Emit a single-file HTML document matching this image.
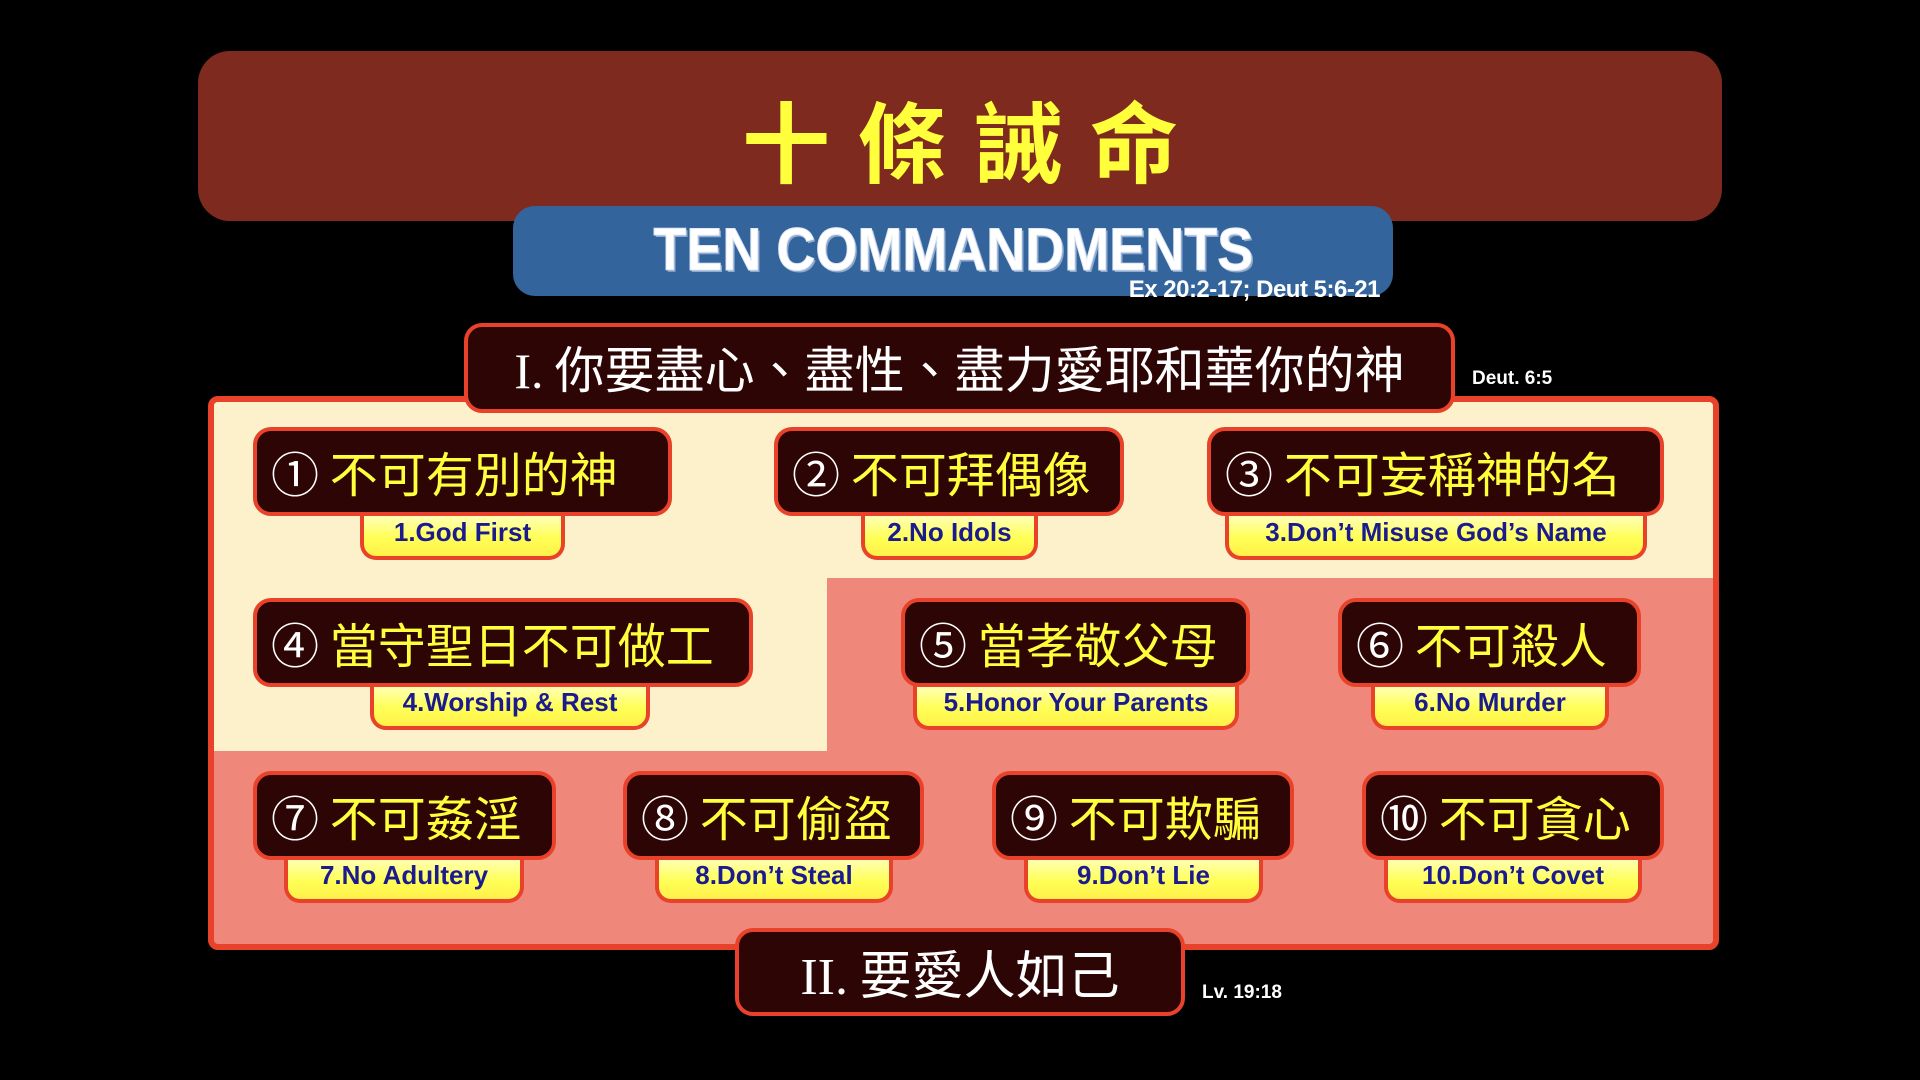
<!DOCTYPE html>
<html><head><meta charset="utf-8"><style>
*{margin:0;padding:0;box-sizing:border-box}
body{width:1920px;height:1080px;background:#000;position:relative;overflow:hidden;font-family:"Liberation Sans","Noto Sans CJK TC",sans-serif}
.abs{position:absolute}
#top{left:198px;top:51px;width:1524px;height:170px;background:#7f2a1f;border-radius:32px}
#title{left:198px;width:1524px;top:94px;text-align:center;color:#ffff3c;font-size:88px;font-weight:bold;letter-spacing:28px;line-height:90px;font-family:"Noto Sans CJK TC",sans-serif;padding-left:28px}
#blue{left:513px;top:206px;width:880px;height:90px;background:#33659c;border-radius:22px}
#ten{left:513px;width:880px;top:220px;text-align:center;color:#fff;font-size:60px;font-weight:bold;line-height:60px}
#ten span{display:inline-block;transform:scaleX(0.9);text-shadow:2px 2px 0 #8fa9cf;-webkit-text-stroke:1px #dfe8f5}
#ex{left:960px;width:420px;top:276px;text-align:right;color:#fff;font-weight:bold;font-size:24px;letter-spacing:-0.5px}
.dark{position:absolute;background:#2e0505;border:4px solid #e8432a;border-radius:18px;color:#ffff3c;font-family:"Noto Sans CJK TC",sans-serif;white-space:nowrap}
.serif{font-family:"Liberation Serif",serif}
#h1{left:464px;top:323px;width:991px;height:90px;color:#fff;text-align:center;font-size:50px;line-height:80px}
#h2{left:735px;top:928px;width:450px;height:88px;color:#fff;text-align:center;font-size:52px;line-height:80px;z-index:5}
.ref{position:absolute;color:#fff;font-weight:bold;font-size:19px}
#panel{left:208px;top:396px;width:1511px;height:554px;background:#f0877b;border:6px solid #e8432a;border-radius:10px;overflow:hidden}
#c1{left:0;top:0;width:1505px;height:176px;background:#fdf1cc}
#c2{left:0;top:0;width:613px;height:349px;background:#fdf1cc}
.box{height:89px;font-size:48px;line-height:80px;padding-left:14px;z-index:3}
.box b{color:#fff;font-weight:normal}
.lab{position:absolute;height:48px;border:4px solid #e8432a;border-top:none;border-radius:0 0 16px 16px;background:linear-gradient(#ffffc8,#ffff55 60%,#fff04a);color:#1b1b8e;font-weight:bold;font-size:26px;text-align:center;line-height:40px;z-index:2;padding-top:0}
</style></head><body>
<div id="top" class="abs"></div>
<div id="title" class="abs">十條誡命</div>
<div id="blue" class="abs"></div>
<div id="ten" class="abs"><span>TEN COMMANDMENTS</span></div>
<div id="ex" class="abs">Ex 20:2-17; Deut 5:6-21</div>

<div id="panel" class="abs"><div id="c1" class="abs"></div><div id="c2" class="abs"></div></div>
<div id="h1" class="dark"><span class="serif">I.</span> 你要盡心、盡性、盡力愛耶和華你的神</div>
<div class="ref" style="left:1472px;top:368px">Deut. 6:5</div>

<div class="dark box" style="left:253px;top:427px;width:419px"><b>①</b> 不可有別的神</div>
<div class="lab" style="left:360px;top:512px;width:205px">1.God First</div>
<div class="dark box" style="left:774px;top:427px;width:350px"><b>②</b> 不可拜偶像</div>
<div class="lab" style="left:861px;top:512px;width:177px">2.No Idols</div>
<div class="dark box" style="left:1207px;top:427px;width:457px"><b>③</b> 不可妄稱神的名</div>
<div class="lab" style="left:1225px;top:512px;width:422px">3.Don’t Misuse God’s Name</div>

<div class="dark box" style="left:253px;top:598px;width:500px"><b>④</b> 當守聖日不可做工</div>
<div class="lab" style="left:370px;top:682px;width:280px">4.Worship &amp; Rest</div>
<div class="dark box" style="left:901px;top:598px;width:349px"><b>⑤</b> 當孝敬父母</div>
<div class="lab" style="left:913px;top:682px;width:326px">5.Honor Your Parents</div>
<div class="dark box" style="left:1338px;top:598px;width:303px"><b>⑥</b> 不可殺人</div>
<div class="lab" style="left:1371px;top:682px;width:238px">6.No Murder</div>

<div class="dark box" style="left:253px;top:771px;width:303px"><b>⑦</b> 不可姦淫</div>
<div class="lab" style="left:284px;top:855px;width:240px">7.No Adultery</div>
<div class="dark box" style="left:623px;top:771px;width:301px"><b>⑧</b> 不可偷盜</div>
<div class="lab" style="left:655px;top:855px;width:238px">8.Don’t Steal</div>
<div class="dark box" style="left:992px;top:771px;width:302px"><b>⑨</b> 不可欺騙</div>
<div class="lab" style="left:1024px;top:855px;width:239px">9.Don’t Lie</div>
<div class="dark box" style="left:1362px;top:771px;width:302px"><b>⑩</b> 不可貪心</div>
<div class="lab" style="left:1384px;top:855px;width:258px">10.Don’t Covet</div>

<div id="h2" class="dark"><span class="serif">II.</span> 要愛人如己</div>
<div class="ref" style="left:1202px;top:982px">Lv. 19:18</div>
</body></html>
